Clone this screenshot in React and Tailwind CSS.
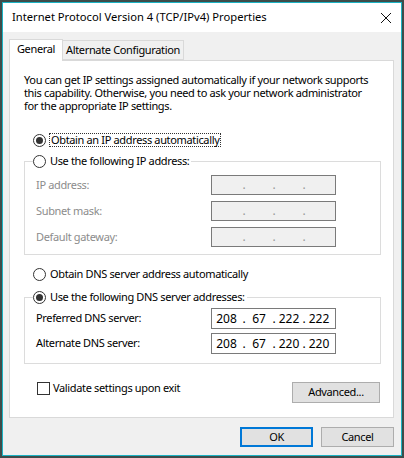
import React from 'react'

const FONT = { fontFamily: "'Segoe UI', 'Noto Sans', 'Liberation Sans', sans-serif" }

function Radio({ checked }) {
  return (
    <span className="flex h-[13px] w-[13px] shrink-0 items-center justify-center rounded-full border border-[#333333] bg-white">
      {checked && <span className="h-[7px] w-[7px] rounded-full bg-[#333333]" />}
    </span>
  )
}

function IpBox({ value, disabled, tall }) {
  const parts = value ? value.split('.') : ['', '', '', '']
  const widths = ['w-[29px]', 'w-[24px]', 'w-[24px]', 'w-[24px]']
  return (
    <div
      className={`flex w-[125px] items-center border border-[#7a7a7a] text-[12px] tracking-normal ${tall ? 'h-[21px]' : 'h-[20px]'} ${
        disabled ? 'bg-[#f0f0f0] text-[#9a9a9a]' : 'bg-white text-black'
      }`}
    >
      {parts.map((p, i) => (
        <React.Fragment key={i}>
          <span className={`${widths[i]} text-center leading-none`}>{p}</span>
          {i < 3 && <span className="w-[6px] text-center leading-none">.</span>}
        </React.Fragment>
      ))}
    </div>
  )
}

function FieldRow({ label, value, disabled, tall }) {
  return (
    <div className="flex items-center">
      <span className={`w-[175px] whitespace-nowrap ${disabled ? 'text-[#8c8c8c]' : 'text-black'}`}>{label}</span>
      <IpBox value={value} disabled={disabled} tall={tall} />
    </div>
  )
}

export default function App() {
  return (
    <div
      className="h-[458px] w-[404px] overflow-hidden bg-[#3e4c4a] pl-[2px] pt-[2px] text-[11px] tracking-[-0.35px] text-black"
      style={FONT}
    >
      <div className="flex h-[454px] w-[400px] flex-col border border-[#1cb3c4] bg-[#f0f0f0]">
        {/* title bar */}
        <div className="flex h-[29px] shrink-0 items-center justify-between bg-white pl-[9px] pr-[8px]">
          <span className="whitespace-nowrap text-[11.2px] tracking-normal">
            Internet Protocol Version 4 (TCP/IPv4) Properties
          </span>
          <svg width="12" height="12" viewBox="0 0 12 12" className="mr-[1px]">
            <path d="M1 1L11 11M11 1L1 11" stroke="#111" strokeWidth="1" />
          </svg>
        </div>

        <div className="flex-1 px-[6px] pt-[7px]">
          {/* tabs */}
          <div className="flex items-end">
            <div className="relative z-10 -mb-px flex h-[22px] w-[54px] items-center justify-center whitespace-nowrap border border-b-0 border-[#d9d9d9] bg-white pb-[2px]">
              General
            </div>
            <div className="flex h-[20px] w-[121px] items-center justify-center whitespace-nowrap border border-l-0 border-[#d9d9d9] bg-[#f0f0f0] pt-[1px]">
              Alternate Configuration
            </div>
          </div>

          {/* panel */}
          <div className="h-[358px] w-[385px] border border-[#d9d9d9] bg-white pt-[12px]">
            <p className="whitespace-nowrap pl-[14px] leading-[13px]">
              You can get IP settings assigned automatically if your network supports
              <br />
              this capability. Otherwise, you need to ask your network administrator
              <br />
              for the appropriate IP settings.
            </p>

            <div className="ml-[23px] mt-[21px] flex h-[14px] items-center">
              <Radio checked />
              <span className="ml-[3px] whitespace-nowrap border border-dotted border-[#333] px-[1px] leading-[12px]">
                Obtain an IP address automatically
              </span>
            </div>

            <fieldset className="ml-[14px] mt-[7px] w-[357px] border border-[#dcdcdc] pb-[7px] pl-[11px] pt-[7px]">
              <legend className="-ml-[3px] flex h-[14px] items-center bg-white pr-[2px]">
                <Radio />
                <span className="ml-[4px] whitespace-nowrap">Use the following IP address:</span>
              </legend>
              <div className="flex flex-col gap-[6px]">
                <FieldRow label="IP address:" disabled />
                <FieldRow label="Subnet mask:" disabled />
                <FieldRow label="Default gateway:" disabled />
              </div>
            </fieldset>

            <div className="ml-[23px] mt-[12px] flex h-[14px] items-center">
              <Radio />
              <span className="ml-[4px] whitespace-nowrap">Obtain DNS server address automatically</span>
            </div>

            <fieldset className="ml-[14px] mt-[9px] w-[357px] border border-[#dcdcdc] pb-[9px] pl-[11px] pt-[4px]">
              <legend className="-ml-[3px] flex h-[14px] items-center bg-white pr-[2px]">
                <Radio checked />
                <span className="ml-[4px] whitespace-nowrap">Use the following DNS server addresses:</span>
              </legend>
              <div className="flex flex-col gap-[4px]">
                <FieldRow label="Preferred DNS server:" value="208.67.222.222" tall />
                <FieldRow label="Alternate DNS server:" value="208.67.220.220" tall />
              </div>
            </fieldset>

            <div className="ml-[27px] mr-[13px] mt-[17px] flex items-start justify-between">
              <div className="flex h-[14px] items-center">
                <span className="h-[13px] w-[13px] border border-[#333333] bg-white" />
                <span className="ml-[3px] whitespace-nowrap">Validate settings upon exit</span>
              </div>
              <button
                type="button"
                className="mt-px flex h-[21px] w-[88px] items-center justify-center border border-[#adadad] bg-[#e1e1e1]"
              >
                Advanced...
              </button>
            </div>
          </div>

          {/* bottom buttons */}
          <div className="mt-[9px] flex w-[385px] justify-end gap-[8px]">
            <button
              type="button"
              className="flex h-[20px] w-[73px] items-center justify-center border-2 border-[#0078d7] bg-[#e1e1e1]"
            >
              OK
            </button>
            <button
              type="button"
              className="flex h-[20px] w-[73px] items-center justify-center border border-[#adadad] bg-[#e1e1e1]"
            >
              Cancel
            </button>
          </div>
        </div>
      </div>
    </div>
  )
}
